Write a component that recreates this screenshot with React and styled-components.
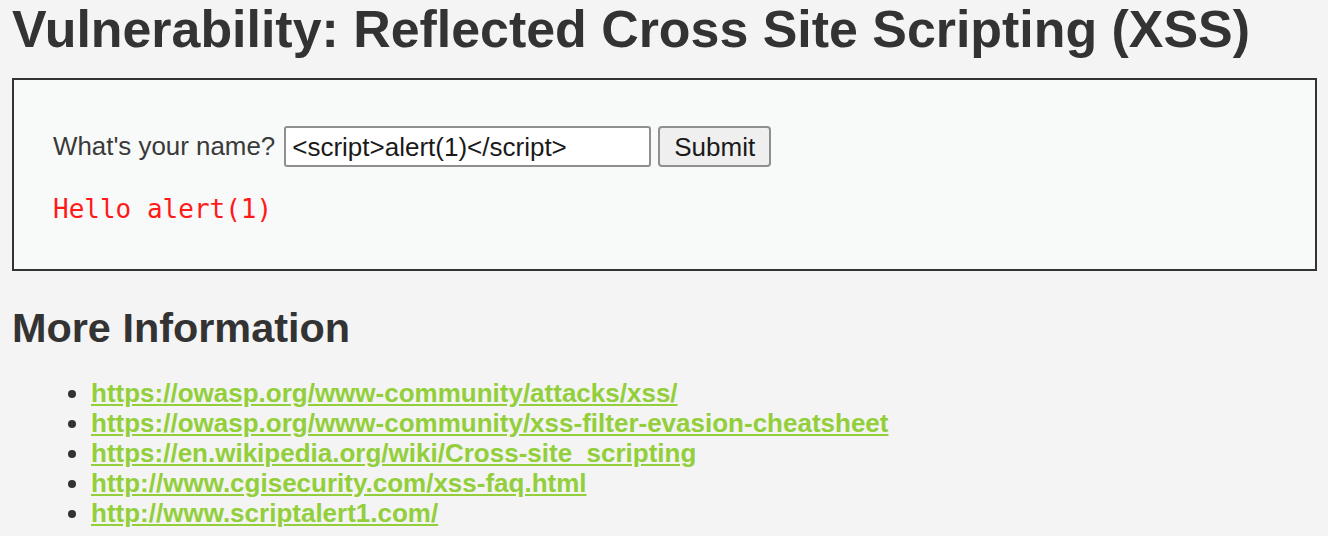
import styled, { createGlobalStyle } from "styled-components";

const GlobalStyle = createGlobalStyle`
  html, body {
    margin: 0;
    padding: 0;
    background: #f4f4f4;
  }
  body {
    font-family: "Liberation Sans", Arial, sans-serif;
    color: #333;
  }
`;

const links = [
  "https://owasp.org/www-community/attacks/xss/",
  "https://owasp.org/www-community/xss-filter-evasion-cheatsheet",
  "https://en.wikipedia.org/wiki/Cross-site_scripting",
  "http://www.cgisecurity.com/xss-faq.html",
  "http://www.scriptalert1.com/",
];

export default function App() {
  return (
    <>
      <GlobalStyle />
      <Page>
        <Title>Vulnerability: Reflected Cross Site Scripting (XSS)</Title>
        <VulnBox>
          <Form onSubmit={(e) => e.preventDefault()}>
            <Label>What's your name?</Label>
            <NameInput type="text" defaultValue="<script>alert(1)</script>" />
            <SubmitButton type="submit">Submit</SubmitButton>
          </Form>
          <Output>Hello alert(1)</Output>
        </VulnBox>
        <SubTitle>More Information</SubTitle>
        <LinkList>
          {links.map((href) => (
            <li key={href}>
              <Link href={href}>{href}</Link>
            </li>
          ))}
        </LinkList>
      </Page>
    </>
  );
}

const Page = styled.div`
  padding: 0 11px 0 12px;
`;

const Title = styled.h1`
  margin: 0;
  font-size: 51.9px;
  line-height: 58px;
  font-weight: bold;
  color: #333;
`;

const VulnBox = styled.div`
  margin-top: 20px;
  height: 193px;
  box-sizing: border-box;
  border: 2px solid #333;
  background: #f8f9f9;
  padding: 46px 39px 0;
`;

const Form = styled.form`
  display: flex;
  align-items: center;
  height: 41px;
`;

const Label = styled.span`
  font-size: 25.9px;
  color: #3a3a3a;
  margin-right: 9px;
`;

const NameInput = styled.input`
  box-sizing: border-box;
  width: 367px;
  height: 41px;
  padding: 1px 6px 0;
  border: 2px solid #8f8f8f;
  border-radius: 3px;
  background: #fff;
  font-family: "Liberation Sans", Arial, sans-serif;
  font-size: 26px;
  color: #1a1a1a;
  outline: none;
`;

const SubmitButton = styled.button`
  box-sizing: border-box;
  margin-left: 7px;
  width: 113px;
  height: 41px;
  border: 2px solid #8f8f8f;
  border-radius: 4px;
  background: #efefef;
  font-family: "Liberation Sans", Arial, sans-serif;
  font-size: 26px;
  color: #1a1a1a;
  padding: 1px 0 0;
`;

const Output = styled.pre`
  margin: 27px 0 0;
  font-family: "DejaVu Sans Mono", monospace;
  font-size: 26px;
  line-height: 30px;
  color: #ff1a1a;
`;

const SubTitle = styled.h2`
  margin: 33px 0 0;
  font-size: 41.4px;
  line-height: 48px;
  font-weight: bold;
  color: #333;
`;

const LinkList = styled.ul`
  margin: 26px 0 0;
  padding-left: 79px;
  li {
    font-size: 26px;
    line-height: 30px;
    color: #333;
  }
`;

const Link = styled.a`
  color: #92cf3a;
  font-weight: bold;
  text-decoration: underline;
`;
